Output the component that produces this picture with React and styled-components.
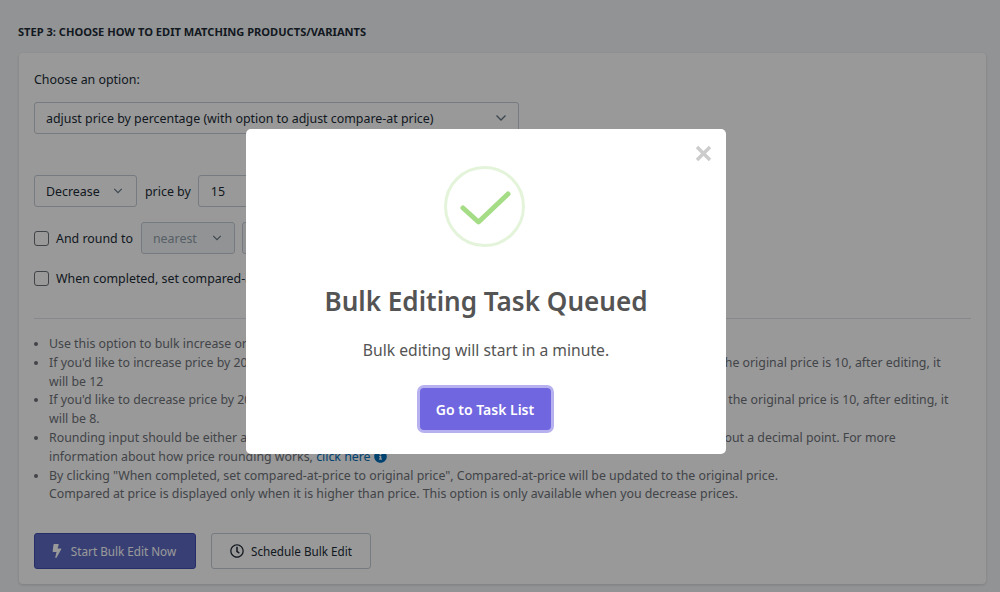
import React from "react";
import styled, { createGlobalStyle } from "styled-components";
import { FaBolt, FaRegClock, FaInfoCircle } from "react-icons/fa";

const Global = createGlobalStyle`
  html, body { margin: 0; padding: 0; height: 592px; overflow: hidden; background: #f4f6f8; }
  body { font-family: "Noto Sans", "Open Sans", sans-serif; color: #212b36; }
  * { box-sizing: border-box; }
`;

const Page = styled.div`
  height: 592px;
  padding: 23px 14px 0 19px;
  overflow: hidden;
`;
const StepTitle = styled.h2`
  margin: 0 0 13px -1px;
  font-size: 11.1px;
  line-height: 17px;
  font-weight: 700;
  color: #212b36;
  text-transform: uppercase;
`;
const Card = styled.section`
  height: 531px;
  background: #fff;
  border-radius: 4px;
  padding: 18px 15px 0;
  box-shadow: 0 1px 3px rgba(63, 63, 68, 0.2);
`;
const Label = styled.div`
  font-size: 12.4px;
  line-height: 18px;
  color: #212b36;
  margin-bottom: 13px;
`;
const Chevron = styled.svg.attrs({ viewBox: "0 0 12 12" })`
  width: ${(p) => p.$size}px;
  height: ${(p) => p.$size}px;
  fill: none;
  stroke: #637381;
  stroke-width: 1.3;
  flex: none;
`;
const ChevronPath = () => <path d="M1.5 3.5 6 8l4.5-4.5" />;
const Select = styled.div`
  width: ${(p) => p.$w}px;
  height: 32px;
  display: flex;
  align-items: center;
  justify-content: space-between;
  padding: 0 ${(p) => p.$pr}px 0 11px;
  border: 1px solid #c4cdd5;
  border-radius: 3px;
  font-size: 12.4px;
  color: ${(p) => (p.$disabled ? "#919eab" : "#212b36")};
  background: ${(p) => (p.$disabled ? "#f4f6f8" : "#fff")};
  flex: none;
`;
const Row = styled.div`
  display: flex;
  align-items: center;
  gap: 8px;
  margin-top: ${(p) => p.$mt}px;
  font-size: 12.4px;
  color: #212b36;
`;
const NumberInput = styled.div`
  width: ${(p) => p.$w}px;
  height: 32px;
  display: flex;
  align-items: center;
  margin-left: -1px;
  padding: 0 12px;
  border: 1px solid #c4cdd5;
  border-radius: 3px;
  font-size: 12.4px;
  background: ${(p) => (p.$disabled ? "#f4f6f8" : "#fff")};
  flex: none;
`;
const Checkbox = styled.span`
  width: 15px;
  height: 15px;
  margin-right: -1px;
  border: 1px solid #6b7177;
  border-radius: 3px;
  background: #fff;
  flex: none;
`;
const Rule = styled.hr`
  margin: 31px 0 16px;
  border: 0;
  border-top: 1px solid #dfe3e8;
`;
const Notes = styled.ul`
  margin: 0;
  padding: 0 14px 0 15px;
  font-size: 12.35px;
  line-height: 18.8px;
  color: #6e7279;
  li::marker { color: #6e7279; }
`;
const Link = styled.a`
  color: #006fbb;
  text-decoration: none;
`;
const InfoIcon = styled(FaInfoCircle)`
  color: #006fbb;
  width: 13px;
  height: 13px;
  vertical-align: -2px;
  margin-left: 3px;
`;
const Actions = styled.div`
  display: flex;
  gap: 15px;
  margin-top: 29px;
`;
const ActionButton = styled.button`
  height: 36px;
  width: ${(p) => p.$w}px;
  display: flex;
  align-items: center;
  justify-content: center;
  gap: 7px;
  padding: 0 ${(p) => (p.$primary ? 4 : 0)}px 0 0;
  font: inherit;
  font-size: 11.7px;
  border-radius: 3px;
  border: 1px solid ${(p) => (p.$primary ? "#3f4eae" : "#c4cdd5")};
  background: ${(p) => (p.$primary ? "#5c6ac4" : "#fff")};
  color: ${(p) => (p.$primary ? "#fff" : "#212b36")};
  svg { width: 14px; height: 14px; }
`;
const Overlay = styled.div`
  position: fixed;
  inset: 0;
  background: rgba(0, 0, 0, 0.4);
  display: flex;
  align-items: flex-start;
  justify-content: center;
  padding: 129px 28px 0 0;
`;
const Modal = styled.div`
  position: relative;
  width: 480px;
  height: 325px;
  background: #fff;
  border-radius: 5px;
  display: flex;
  flex-direction: column;
  align-items: center;
  padding-top: 37px;
`;
const Close = styled.svg`
  position: absolute;
  top: 16px;
  right: 14px;
  width: 17px;
  height: 17px;
  stroke: #ccc;
  stroke-width: 3.4;
`;
const SuccessIcon = styled.svg`
  width: 81px;
  height: 81px;
  margin-right: 3px;
  fill: none;
  display: block;
`;
const Title = styled.h2`
  margin: 34px 0 0;
  font-size: 26.1px;
  line-height: 40px;
  font-weight: 600;
  color: #545454;
`;
const Message = styled.p`
  margin: 20px 0 0;
  font-size: 15.7px;
  line-height: 18px;
  color: #545454;
`;
const Confirm = styled.button`
  margin: 29px 2px 0 0;
  width: 131px;
  height: 42px;
  border: 0;
  border-radius: 4px;
  background: #7066e0;
  box-shadow: 0 0 0 3px rgba(112, 102, 224, 0.5);
  color: #fff;
  font: inherit;
  font-size: 14px;
  font-weight: 600;
`;

export default function App() {
  return (
    <>
      <Global />
      <Page>
        <StepTitle>Step 3: Choose how to edit matching products/variants</StepTitle>
        <Card>
          <Label>Choose an option:</Label>
          <Select $w={485} $pr={11}>
            adjust price by percentage (with option to adjust compare-at price)
            <Chevron $size={12}><ChevronPath /></Chevron>
          </Select>
          <Row $mt={41}>
            <Select $w={103} $pr={13}>Decrease<Chevron $size={10}><ChevronPath /></Chevron></Select>
            <span>price by</span>
            <NumberInput $w={160}>15</NumberInput>
          </Row>
          <Row $mt={15}>
            <Checkbox />
            <span>And round to</span>
            <Select $w={94} $pr={12} $disabled>nearest<Chevron $size={10}><ChevronPath /></Chevron></Select>
            <NumberInput $w={120} $disabled />
          </Row>
          <Row $mt={16}>
            <Checkbox />
            <span>When completed, set compared-at-price to original price</span>
          </Row>
          <Rule />
          <Notes>
            <li>Use this option to bulk increase or decrease prices by a percentage.</li>
            <li>If you'd like to increase price by 20%, select the "Increase" option and then enter 20 in the input box. For example, if the original price is 10, after editing, it will be 12</li>
            <li>If you'd like to decrease price by 20%, select the "Decrease" option and then enter 20 in the input box. For example, if the original price is 10, after editing, it will be 8.</li>
            <li>Rounding input should be either a whole number or a positive number with two digits, such as 10, 50 or 99, and without a decimal point. For more information about how price rounding works, <Link>click here</Link><InfoIcon /></li>
            <li>By clicking "When completed, set compared-at-price to original price", Compared-at-price will be updated to the original price.<br />Compared at price is displayed only when it is higher than price. This option is only available when you decrease prices.</li>
          </Notes>
          <Actions>
            <ActionButton $primary $w={162}><FaBolt />Start Bulk Edit Now</ActionButton>
            <ActionButton $w={160}><FaRegClock />Schedule Bulk Edit</ActionButton>
          </Actions>
        </Card>
      </Page>
      <Overlay>
        <Modal>
          <Close viewBox="0 0 17 17"><path d="M2 2l13 13M15 2 2 15" /></Close>
          <SuccessIcon viewBox="0 0 81 81">
            <circle cx="40.5" cy="40.5" r="39" stroke="rgba(165,220,134,.3)" strokeWidth="3" />
            <path d="M19 42l15.5 14L64 28" stroke="#a5dc86" strokeWidth="5" strokeLinecap="round" strokeLinejoin="round" />
          </SuccessIcon>
          <Title>Bulk Editing Task Queued</Title>
          <Message>Bulk editing will start in a minute.</Message>
          <Confirm>Go to Task List</Confirm>
        </Modal>
      </Overlay>
    </>
  );
}
